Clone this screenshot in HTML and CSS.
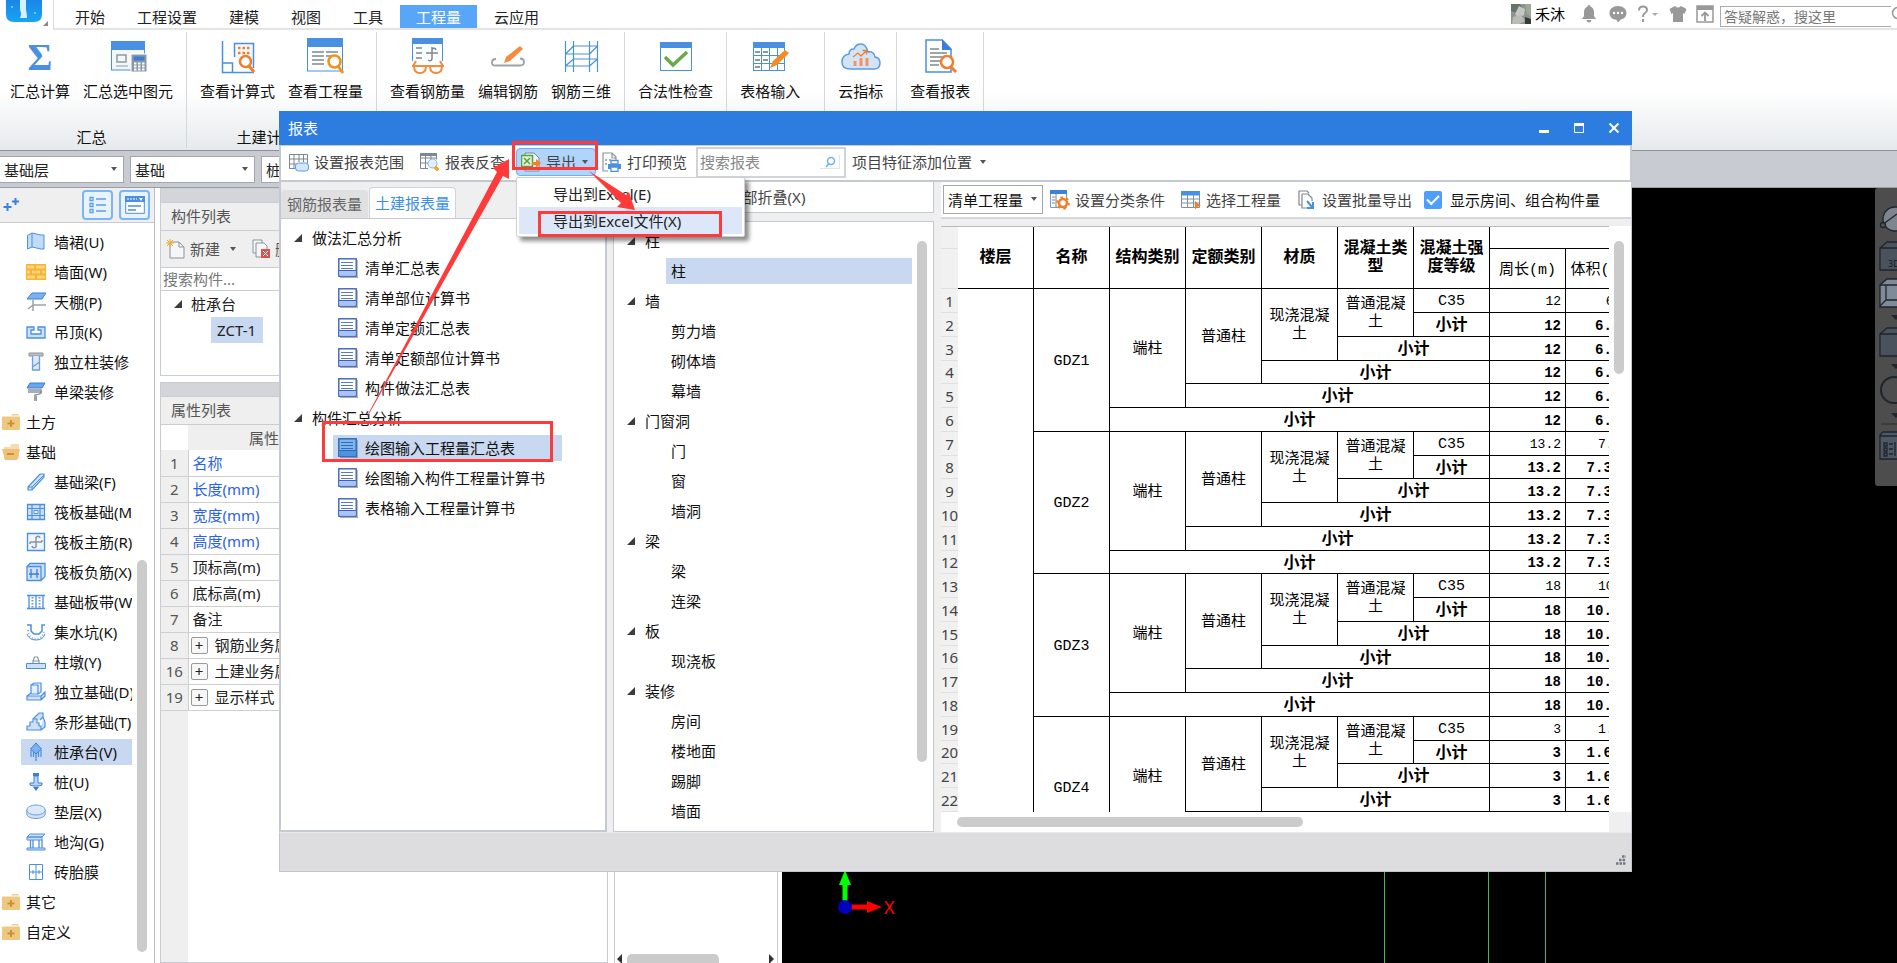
FILE: index.html
```html
<!DOCTYPE html>
<html lang="zh-CN">
<head>
<meta charset="utf-8">
<title>报表</title>
<link rel="stylesheet" href="styles.css">
</head>
<body>
<svg class="defs" aria-hidden="true">
  <symbol id="i-doc" viewBox="0 0 20 20"><path d="M2 19.5h18V2" fill="none" stroke="#a9a9b4" stroke-width="1.5"/><rect x=".8" y=".8" width="17.4" height="17.4" fill="#fff" stroke="#3c62b8" stroke-width="1.4"/><rect x="1.5" y="12.5" width="16" height="5" fill="#a9c4fa"/><path d="M3 4.5h12M3 7.5h12M3 10.5h12" stroke="#5a78c8" stroke-width="1"/><path d="M1 12.5h17" stroke="#3c62b8"/></symbol>
  <symbol id="i-doc-on" viewBox="0 0 20 20"><path d="M2 19.5h18V2" fill="none" stroke="#8297b8" stroke-width="1.5"/><rect x=".8" y=".8" width="17.4" height="17.4" fill="#7fb5ec" stroke="#2b67b4" stroke-width="1.4"/><rect x="1.5" y="12.5" width="16" height="5" fill="#4c93e4"/><path d="M3 4.5h12M3 7.5h12M3 10.5h12" stroke="#2f6dbb" stroke-width="1"/><path d="M1 12.5h17" stroke="#2b67b4"/></symbol>
  <symbol id="i-folder" viewBox="0 0 18 18"><path d="M9 2.5 10.5 1H16l1.5 1.5z" fill="#eecb8f"/><rect x="0" y="3.5" width="18" height="13.5" rx="1" fill="#efc880"/><path d="M9 7v7M5.500 10.500h7" stroke="#c8913a" stroke-width="2"/></symbol>
  <symbol id="i-tri" viewBox="0 0 8 8"><path d="M8 0v8H0z" fill="#3c3c3c"/></symbol>
  <symbol id="i-caret" viewBox="0 0 8 5"><path d="M1 0h6L4 4z" fill="#555"/></symbol>
</svg>

<div class="app">
  <header class="tabs">
    <div class="logo">
      <svg width="36" height="24" viewBox="0 0 36 24"><defs><linearGradient id="lg" x1="0" y1="0" x2="0" y2="1"><stop offset="0" stop-color="#1a86e8"/><stop offset="1" stop-color="#17a4f5"/></linearGradient></defs><path d="M0 0h36v14q0 8-8 8H8q-8 0-8-8z" fill="url(#lg)"/><path d="M14 0h6v10q1 4 1 8h-7q2-4 0-8z" fill="#d6f1ff"/><circle cx="6" cy="7" r="1" fill="#9bd7ff"/><circle cx="29" cy="13" r="1" fill="#9bd7ff"/></svg>
      <svg width="5" height="5" viewBox="0 0 8 8"><path d="M8 0v8H0z" fill="#888"/></svg>
    </div>
    <nav class="tablist">
      <button>开始</button><button>工程设置</button><button>建模</button><button>视图</button><button>工具</button><button class="on">工程量</button><button>云应用</button>
      <div class="account">
        <svg width="20" height="20" viewBox="0 0 20 20"><rect width="20" height="20" fill="#8c9690"/><path d="M0 0h9l4 6-5 4-8-3z" fill="#66746a"/><path d="M8 2l6 3-1 6-6 3-3-4z" fill="#c3c9c1"/><path d="M14 0h6v13l-4-3z" fill="#9ea899"/><path d="M2 13l8-2 4 6-6 3H1z" fill="#b9bdb2"/><path d="M14 13l6 2v5h-6z" fill="#343c36"/></svg>
        <span>禾沐</span>
        <svg class="m1" width="14" height="18" viewBox="0 0 14 18"><path d="M7 0q1.500 0 1.500 1.500Q12 3 12 7v4l2 3H0l2-3V7q0-4 3.500-5.500Q5.500 0 7 0zM4.500 15h5Q9 17.500 7 17.500T4.500 15z" fill="#999"/></svg>
        <svg class="m2" width="18" height="18" viewBox="0 0 18 18"><path d="M9 1c5 0 8.500 3 8.500 7 0 3.500-2.500 6-6 6.700L9 17.500l-1.500-2.700C3 14.500.5 12 .5 8c0-4 3.500-7 8.500-7z" fill="#999"/><circle cx="5" cy="8" r="1.200" fill="#fff"/><circle cx="9" cy="8" r="1.200" fill="#fff"/><circle cx="13" cy="8" r="1.200" fill="#fff"/></svg>
        <svg class="m3" width="22" height="18" viewBox="0 0 22 18"><path d="M2 5.500Q2 1.500 6 1.500T10 5q0 2-2.500 3.500Q6 9.500 6 12M6 14v3" fill="none" stroke="#999" stroke-width="2"/><path d="M15 8h6l-3 3z" fill="#aaa"/></svg>
        <svg class="m3" width="18" height="18" viewBox="0 0 18 18"><path d="M6 1q3 3 6 0l5.500 3-2 5L14 8v9H4V8l-1.500 1-2-5z" fill="#999"/></svg>
        <svg class="m4" width="18" height="18" viewBox="0 0 18 18"><path d="M1 1h16v16H1z" fill="none" stroke="#999" stroke-width="1.500"/><path d="M1 1h16v4H1z" fill="#999"/><path d="M9 16V8M5.500 11 9 7.500l3.500 3.500" fill="none" stroke="#999" stroke-width="1.800"/></svg>
        <input class="ask" type="text" aria-label="搜索" placeholder="答疑解惑，搜这里">
        <svg class="askmag" width="6" height="16" viewBox="0 0 6 16"><circle cx="7" cy="7" r="5.500" fill="none" stroke="#999" stroke-width="1.500"/></svg>
      </div>
    </nav>
  </header>

  <section class="ribbon">
    <div class="rgroup first"><div class="ritems">
      <button><svg width="40" height="40"><text x="20" y="32" text-anchor="middle" class="sigma">Σ</text></svg>汇总计算</button>
      <button><svg width="40" height="40"><rect x="3.500" y="4" width="33" height="28" fill="#f4f7fa" stroke="#4a90e2"/><rect x="3" y="3" width="34" height="9" fill="#4a90e2"/><rect x="9" y="17" width="9" height="7" fill="none" stroke="#8f9aa3" stroke-width="1.500"/><path d="M8 28h12" stroke="#8f9aa3"/><rect x="23" y="16" width="16" height="18" fill="#8b98a5" stroke="#fff"/><rect x="25.500" y="18.500" width="11" height="4" fill="#3b7ed8"/><path d="M26 25.500h11M26 28.500h11M26 31.500h11" stroke="#fff" stroke-width="2" stroke-dasharray="2.500 1.500"/></svg>汇总选中图元</button>
    </div><span>汇总</span></div>
    <div class="rgroup"><div class="ritems">
      <button><svg width="40" height="40"><path d="M4.500 3v31.500H36M4.500 25h10v9.500" fill="none" stroke="#4a90e2" stroke-width="1.500"/><path d="M16.500 19V5.500h19V30" fill="#f5f8fb" stroke="#4a90e2" stroke-width="1.500"/><path d="M20 10h13M20 15h13" stroke="#f07f2b" stroke-width="2.500" stroke-dasharray="2.500 2"/><circle cx="27.500" cy="23.500" r="5.500" fill="#fff" stroke="#f07f2b" stroke-width="2.500"/><path d="M31 28l5 6" stroke="#f07f2b" stroke-width="3"/></svg>查看计算式</button>
      <button><svg width="40" height="40"><rect x="1.500" y="1" width="35" height="32" fill="#fdfefe" stroke="#4a90e2"/><rect x="1" y="0" width="36" height="9" fill="#4a90e2"/><path d="M6 14h12M6 18h12M6 22h12M6 26h12M20 14h12M20 18h12" stroke="#7f8890" stroke-width="1.500"/><circle cx="28.500" cy="23.500" r="6" fill="#fff" stroke="#f0921e" stroke-width="2.500"/><path d="M32 28l5 7" stroke="#f0921e" stroke-width="3"/></svg>查看工程量</button>
    </div><span>土建计算结果</span></div>
    <div class="rgroup"><div class="ritems">
      <button><svg width="40" height="40"><path d="M4.500 23V1h30v22" fill="#fbfdfe" stroke="#4a90e2"/><rect x="4" y="0" width="31" height="6" fill="#4a90e2"/><path d="M8 10h6M8 15h6M8 20h6M18 15h12M24 9v12q-1 3-4 1M24 11q3-2 4 1" fill="none" stroke="#7f8890" stroke-width="1.500"/><path d="M8 23 5 28M32 23l3 5M4 28h32" stroke="#f58b3c" stroke-width="2" fill="none"/><path d="M6 28h12q0 7-6 7t-6-7zM22 28h12q0 7-6 7t-6-7z" fill="#fff" stroke="#f58b3c" stroke-width="2"/></svg>查看钢筋量</button>
      <button><svg width="40" height="40"><path d="M8 21q-4 0-4 3.500T8 27.500h24q4 0 4-3.500t-4-3.500" fill="none" stroke="#9aa2a8" stroke-width="1.800"/><path d="M32 8l3 3-13 12-6 2 2-6z" fill="#f58b3c"/></svg>编辑钢筋</button>
      <button><svg width="40" height="40"><path d="M4.500 3v31M12.500 3v31M28.500 3v31M36.500 3v31M4.500 16h24M4.500 28h24M12 8h25M12 21h25M4.500 16l8-8M28.500 16l8-8M4.500 28l8-7M28.500 28l8-7" fill="none" stroke="#4a90e2" stroke-width="1.200"/></svg>钢筋三维</button>
    </div></div>
    <div class="rgroup"><div class="ritems">
      <button><svg width="40" height="40"><rect x="4.500" y="4.500" width="31" height="28" fill="#fff" stroke="#4a90e2"/><rect x="4" y="4" width="32" height="6" fill="#4a90e2"/><path d="M9 19l8 8 14-13" fill="none" stroke="#6aaa4c" stroke-width="3.500"/></svg>合法性检查</button>
    </div></div>
    <div class="rgroup wide"><div class="ritems">
      <button><svg width="40" height="40"><rect x="3.500" y="4.500" width="31" height="28" fill="#fff" stroke="#4a90e2"/><rect x="3" y="4" width="32" height="6" fill="#4a90e2"/><path d="M4 17.500h30M4 25.500h30M11.500 10v22M19.500 10v22M27.500 10v22" stroke="#4a90e2"/><path d="M5 14h5M13 14h5M5 22h5M5 29h5M13 22h5" stroke="#6a7580" stroke-width="1.300"/><path d="M35 12l4 3-12 12-7 3 3-7z" fill="#f58b1e"/></svg>表格输入</button>
    </div></div>
    <div class="rgroup"><div class="ritems">
      <button><svg width="40" height="40"><path d="M9 31q-8 0-8-7t7-8q0-5 5-5 2-5 7-5t7 8q6-1 7 5 5 1 5 6 0 6-6 6z" fill="#d4e4f8" stroke="#5b9be6" stroke-width="1.500"/><path d="M14 28v-5M20 28v-8M26 28v-8" stroke="#f5935a" stroke-width="3"/><path d="M12 19l5-4 3 3 5-5M21.500 12.500h4v4" fill="none" stroke="#f07f2b" stroke-width="1.300"/></svg>云指标</button>
    </div></div>
    <div class="rgroup"><div class="ritems">
      <button><svg width="40" height="40"><path d="M6 2h16l9 9v23H6z" fill="#fff" stroke="#4a90e2" stroke-width="1.500"/><path d="M22 1v11h10z" fill="#3b7ed8"/><path d="M10 11h9M10 15h17M10 19h17M10 23h10M10 27h9" stroke="#7f8890" stroke-width="1.400"/><circle cx="27" cy="24" r="6" fill="#fff" stroke="#f07f2b" stroke-width="2.500"/><path d="M31 29l5 5" stroke="#f07f2b" stroke-width="3"/></svg>查看报表</button>
    </div></div>
  </section>

  <div class="combos">
    <label class="combo"><select aria-label="楼层"><option>基础层</option></select><svg width="8" height="5"><use href="#i-caret"/></svg></label>
    <label class="combo"><select aria-label="类型"><option>基础</option></select><svg width="8" height="5"><use href="#i-caret"/></svg></label>
    <label class="combo"><select aria-label="构件"><option>桩承台</option></select><svg width="8" height="5"><use href="#i-caret"/></svg></label>
  </div>

  <main class="work">
    <aside class="nav">
      <div class="navhead">
        <svg width="17" height="14" viewBox="0 0 17 14"><path d="M4.500 5v8M.500 9h8M12.500 0v7M9 3.500h7" stroke="#3b82dc" stroke-width="2"/></svg>
        <button aria-label="列表"><svg width="18" height="18" viewBox="0 0 18 18"><path d="M7 3h10M7 9h10M7 15h10" stroke="#5a9eec" stroke-width="1.500"/><path d="M1 1.500h3v3H1zM1 7.500h3v3H1zM1 13.500h3v3H1z" fill="none" stroke="#5a9eec" stroke-width="1.300"/></svg></button>
        <button aria-label="卡片"><svg width="20" height="18" viewBox="0 0 20 18"><rect x=".7" y=".7" width="18.600" height="16.600" fill="#fff" stroke="#4a90e2"/><path d="M0 0h20v6H0z" fill="#4a90e2"/><path d="M2 3h10" stroke="#fff" stroke-dasharray="2 1"/><path d="M14 2h4l-2 3z" fill="#fff"/><path d="M3 10h13M3 14h8" stroke="#4a90e2" stroke-width="1.500"/></svg></button>
      </div>
      <div class="navbody">
        <ul class="navlist">
          <li><svg><path d="M1.500 3.500 6 1l9 2 3 0v14l-3 0-9-2-4.500 2z" fill="#c3dbf7" stroke="#4a90e2"/><path d="M6 1v14" stroke="#4a90e2"/></svg>墙裙(U)</li>
          <li><svg><rect y="2" width="20" height="16" fill="#f9b233"/><path d="M1 3.500h7v3H1zM10 3.500h9v3h-9zM1 8.500h3v3H1zM6 8.500h8v3H6zM16 8.500h3v3h-3zM1 13.500h8v3H1zM11 13.500h8v3h-8z" fill="#ffd67d"/></svg>墙面(W)</li>
          <li><svg><path d="M6 1h14l-4 6H1z" fill="#7db2f0" stroke="#3b7ed8"/><path d="M7 8v11M7 13h13M2 17l5-4" fill="none" stroke="#9aa2a8" stroke-width="1.500"/></svg>天棚(P)</li>
          <li><svg><path d="M1 5h7v3H5v4h10V8h-3V5h7v11H1z" fill="#cfe1f8" stroke="#4a90e2" stroke-width="1.300"/></svg>吊顶(K)</li>
          <li><svg><path d="M3 1h14v3H3z" fill="#b9bfc4" stroke="#8b949b"/><path d="M6.500 4v14h7V4M6.500 15l7-5" fill="#dbe8f8" stroke="#6f9fd8" stroke-width="1.300"/></svg>独立柱装修</li>
          <li><svg><path d="M4 1h15l-3 5H1z" fill="#6aa6ee" stroke="#3b7ed8"/><path d="M2 8h13v2H2M15 9q2 3-6 4v2" fill="none" stroke="#8b949b" stroke-width="1.500"/><path d="M8 14h3v5H8z" fill="#9aa2a8"/></svg>单梁装修</li>
          <li class="grp"><svg><use href="#i-folder"/></svg>土方</li>
          <li class="grp"><svg><path d="M9 1h8v15H2V4h6z" fill="#f3dcae"/><path d="M0 6h18l-3 11H3z" fill="#efc27a"/><path d="M5 11h7" stroke="#c8913a" stroke-width="2"/></svg>基础</li>
          <li><svg><path d="M2 15 14 2h4v3L6 18H2z" fill="#cfe1f8" stroke="#4a90e2" stroke-width="1.200"/><path d="M2 15h4v3M6 15 18 3" fill="none" stroke="#4a90e2"/></svg>基础梁(F)</li>
          <li><svg><path d="M1.500 2.500h17v15h-17z" fill="#cfe1f8" stroke="#4a90e2" stroke-width="1.300"/><path d="M6 2v16M14 2v16M1 6.500h18M1 13.500h18" stroke="#4a90e2" stroke-width="1.200"/><path d="M8 8.500h4v3H8z" fill="#fff" stroke="#4a90e2"/></svg>筏板基础(M)</li>
          <li><svg><path d="M1.500 1.500h17v17h-17z" fill="#eef5fd" stroke="#4a90e2" stroke-width="1.300"/><path d="M4 10h12M10 5v10q-3 2-4-1M10 5q3-2 4 1M4 10v2M16 10V8" fill="none" stroke="#8b949b" stroke-width="1.500"/></svg>筏板主筋(R)</li>
          <li><svg><path d="M1 4.500h14v14H1zM1 4.500 4 1.500h15v13l-4 4" fill="#cfe1f8" stroke="#4a90e2" stroke-width="1.300"/><path d="M5 7v9M11 7v9M3 12h10" stroke="#3b7ed8" stroke-width="1.300"/></svg>筏板负筋(X)</li>
          <li><svg><path d="M3 4v12M10 4v12M17 4v12M1 3.500h18M1 16.500h18" stroke="#4a90e2" stroke-width="1.300"/><path d="M6.500 5v11M13.500 5v11" stroke="#6f9fd8" stroke-width="2" stroke-dasharray="1.500 1.500"/></svg>基础板带(W)</li>
          <li><svg><path d="M1 3h4v6l3 3h5l3-3V3h3" fill="none" stroke="#4a90e2" stroke-width="1.500"/><path d="M2 8q1 9 8 9t8-9" fill="none" stroke="#8ba7c8" stroke-width="2" stroke-dasharray="1 2"/><path d="M1 12q2 6 9 6t9-6" fill="none" stroke="#4a90e2"/></svg>集水坑(K)</li>
          <li><svg><path d="M.500 11.500h19v5H.500z" fill="#cfe1f8" stroke="#4a90e2"/><path d="M7 11V9l1.500-4h3L13 9v2M7 9h6" fill="none" stroke="#8b949b" stroke-width="1.200"/></svg>柱墩(Y)</li>
          <li><svg><path d="M1 14h14v4H1zM1 14l4-3M15 14l4-4v4l-4 4" fill="#cfe1f8" stroke="#4a90e2" stroke-width="1.200"/><path d="M5 3h7v9H5zM5 3l3-2h7v9l-3 2V3" fill="#e6f0fc" stroke="#4a90e2" stroke-width="1.200"/></svg>独立基础(D)</li>
          <li><svg><path d="M1 18v-4h3v-4h3V7h4v4h2v3h2v4zM7 7l6-6h4v4l-3 3M17 5l2 5v5l-4 3" fill="#cfe1f8" stroke="#4a90e2" stroke-width="1.200"/></svg>条形基础(T)</li>
          <li class="on"><svg><path d="M10 1l5.500 6-5.500 5-5.500-5z" fill="#7db2f0" stroke="#3b7ed8"/><path d="M5 8v7M10 12v7M15 8v7M7.500 10v5M12.500 10v5" stroke="#4a90e2" stroke-width="1.300"/></svg>桩承台(V)</li>
          <li><svg><path d="M8 4h4v7h4v2q-2 1-4 1H8q-2 0-4-1v-2h4z" fill="#b9d5f7" stroke="#3b7ed8"/><path d="M7 1h6v3H7zM7 15h6l-3 4z" fill="#3b7ed8"/></svg>桩(U)</li>
          <li><svg><path d="M.800 8v4c0 6 18.400 6 18.400 0V8" fill="#cfe1f8" stroke="#6f9fd8"/><ellipse cx="10" cy="8" rx="9.200" ry="5" fill="#dce9fa" stroke="#6f9fd8"/></svg>垫层(X)</li>
          <li><svg><path d="M1 5l3-3h15l-3 3zM1 5h15v3H1zM1 18h18v-2H1z" fill="#cfe1f8" stroke="#4a90e2"/><path d="M4.500 8v8M7 8v8M13 8v8M16 8v8" stroke="#4a90e2" stroke-width="1.300"/></svg>地沟(G)</li>
          <li><svg><path d="M3.500 2.500h13v15h-13zM10 2v15M3 10h14M7 8v4M13 8v4" fill="none" stroke="#4a90e2"/></svg>砖胎膜</li>
          <li class="grp"><svg><use href="#i-folder"/></svg>其它</li>
          <li class="grp"><svg><use href="#i-folder"/></svg>自定义</li>
        </ul>
        <div class="vtrack navtrack"><i></i></div>
      </div>
    </aside>

    <div class="props">
      <section class="panel">
        <div class="grab"></div>
        <h2>构件列表</h2>
        <div class="ptools">
          <button><svg width="20" height="20" viewBox="0 0 20 20"><path d="M4 3h9l5 5v11H4z" fill="#f4f6f8" stroke="#8b949b"/><path d="M13 3v5h5" fill="none" stroke="#8b949b"/><path d="M4 0v8M0 4h8M1 1l6 6M7 1 1 7" stroke="#f5a623"/></svg>新建<svg class="pcar" width="8" height="5"><use href="#i-caret"/></svg></button>
          <button><svg width="20" height="20" viewBox="0 0 20 20"><path d="M5 14H2V1h9v3M5 4h8l3 3v11H5z" fill="#f4f6f8" stroke="#8b949b"/><path d="M10 10h9v9h-9z" fill="#d9534f"/><path d="M12 12l5 5M17 12l-5 5" stroke="#fff"/></svg>删除</button>
        </div>
        <input class="psearch" type="text" aria-label="搜索构件" placeholder="搜索构件...">
        <ul class="ctree"><li><svg width="8" height="8"><use href="#i-tri"/></svg>桩承台</li><li class="on">ZCT-1</li></ul>
      </section>
      <section class="panel grow">
        <div class="grab"></div>
        <h2>属性列表</h2>
        <table class="attrs">
          <tr><th></th><th>属性名称</th></tr>
          <tr><td>1</td><td class="b">名称</td></tr>
          <tr><td>2</td><td class="b">长度(mm)</td></tr>
          <tr><td>3</td><td class="b">宽度(mm)</td></tr>
          <tr><td>4</td><td class="b">高度(mm)</td></tr>
          <tr><td>5</td><td>顶标高(m)</td></tr>
          <tr><td>6</td><td>底标高(m)</td></tr>
          <tr><td>7</td><td>备注</td></tr>
          <tr><td>8</td><td><button class="plus">+</button>钢筋业务属性</td></tr>
          <tr><td>16</td><td><button class="plus">+</button>土建业务属性</td></tr>
          <tr><td>19</td><td><button class="plus">+</button>显示样式</td></tr>
        </table>
        <div class="attrfill"></div>
      </section>
    </div>

    <div class="side">
      <div class="hbar"><svg width="5" height="10"><path d="M5 0v10L0 5z" fill="#333"/></svg><i></i><svg width="5" height="10"><path d="M0 0v10l5-5z" fill="#333"/></svg></div>
    </div>

    <div class="canvas">
      <svg class="axis" width="60" height="60" viewBox="0 0 60 60"><path d="M13 44V18" stroke="#0f0" stroke-width="5"/><path d="M13 7l6 15H7z" fill="#0f0"/><path d="M14 44h24" stroke="#f00" stroke-width="5"/><path d="M35 38l15 6-15 6z" fill="#f00"/><circle cx="13" cy="44" r="7" fill="#00b"/></svg>
      <span class="axisx">X</span>
      <i class="gl g1"></i><i class="gl g2"></i><i class="gl g3"></i>
      <div class="viewtools">
        <svg width="22" height="298" viewBox="0 0 22 298"><g stroke="#1f252c" stroke-width="1.300">
          <circle cx="20" cy="31" r="12" fill="#7d858e"/><path d="M7 37 22 26" fill="none"/><circle cx="8" cy="37" r="2.500" fill="#555"/>
          <path d="M5 60l7-6h12v28H5zM5 60h19" fill="#4a525e"/>
          <path d="M5 97l7-6h12v28H5z" fill="#7f8b99"/><path d="M5 97h19M11 97v15l-6 6M11 112h13" fill="none"/>
          <path d="M5 146l7-6h12v28H5zM5 146h19" fill="#4a525e"/>
          <circle cx="19" cy="202" r="13" fill="none" stroke-width="2"/>
          <path d="M6 236h16" stroke="#333"/>
          <path d="M5 247l3-3h16v27H5zM5 248h19" fill="#4f5966"/><path d="M9 255h3v3H9zM9 260h3v3H9zM9 265h3v3H9zM14 256h4M14 261h4M14 266h4M20 254v14" fill="none"/></g>
          <path d="M16 127h10l-5 5zM16 176h10l-5 5zM16 225h10l-5 5z" fill="#1f252c"/>
          <text x="13" y="79" class="t3d">3D</text></svg>
      </div>
    </div>
  </main>

  <div class="dialog" role="dialog" aria-label="报表">
    <div class="dtitle"><span>报表</span>
      <button aria-label="最小化"><svg width="12" height="12"><path d="M1 9.500h10" stroke="#fff" stroke-width="3"/></svg></button>
      <button aria-label="最大化"><svg width="12" height="12"><path d="M1.500 2h9v8.500h-9z" fill="none" stroke="#fff"/><path d="M1 2.500h10" stroke="#fff" stroke-width="3"/></svg></button>
      <button aria-label="关闭"><svg width="12" height="12"><path d="M1.500 1.500l9 9M10.500 1.500l-9 9" stroke="#fff" stroke-width="2"/></svg></button>
    </div>
    <div class="dtools">
      <button class="tb"><svg width="20" height="20" viewBox="0 0 20 20"><path d="M.500 2.500h18v9M.500 2.500v14H6M.500 7h18M.500 12H7M5 2v14M10 2v8M14.500 2v8" fill="none" stroke="#7d8791"/><rect x="6.500" y="11" width="13" height="8" rx="3" fill="#d3e6fb" stroke="#5a9eec"/></svg>设置报表范围</button>
      <button class="tb"><svg width="20" height="20" viewBox="0 0 20 20"><path d="M.500 1.500h16v6M.500 1.500v15H8M.500 6h16M.500 11H8M5.500 4v12M11 4v4" fill="none" stroke="#7d8791"/><path d="M0 1h17v3H0z" fill="#7d8791"/><circle cx="12.500" cy="11.500" r="4.500" fill="#e3effc" stroke="#7db2f0"/><path d="M16 14l3 3-2 2-3-3z" fill="#f5a623" stroke="#f5a623"/></svg>报表反查</button>
      <div class="export">
        <button class="tb open" aria-haspopup="menu"><svg width="20" height="20" viewBox="0 0 20 20"><path d="M4 1h9l5 5v13H4z" fill="#e9f2fc" stroke="#7d8791"/><rect x="0.500" y="3.500" width="11" height="11" fill="#e3f2d9" stroke="#5aa03c" stroke-width="1.500"/><path d="M3 6l6 6M9 6l-6 6" stroke="#5aa03c" stroke-width="1.500"/><path d="M15 7l5 4-5 5v-3h-4v-3h4z" fill="#f58220"/></svg>导出<svg class="car" width="8" height="5"><use href="#i-caret"/></svg></button>
        <div class="menu" role="menu"><button role="menuitem">导出到Excel(E)</button><button role="menuitem" class="on">导出到Excel文件(X)</button></div>
      </div>
      <button class="tb"><svg width="20" height="20" viewBox="0 0 20 20"><path d="M6 19H1V1h9l4 4v3M10 1v5h4" fill="#fff" stroke="#8b949b" stroke-width="1.200"/><path d="M3 8h2M3 12h2M7 8h2" stroke="#8b949b" stroke-width="1.500"/><path d="M6 12h13v5H6z" fill="#4a90e2"/><path d="M9 8.500h7V12H9zM9 15h7v4.500H9z" fill="#fff" stroke="#4a90e2" stroke-width="1.300"/></svg>打印预览</button>
      <div class="dsearch"><input type="text" aria-label="搜索报表" placeholder="搜索报表"><svg width="20" height="14" viewBox="0 0 20 14"><path d="M0 13.500h19.500V0" fill="none" stroke="#e3e3e3"/><circle cx="11" cy="6" r="3.500" fill="none" stroke="#6bb0f2" stroke-width="1.500"/><path d="M8.500 9 6 12" stroke="#6bb0f2" stroke-width="1.500"/></svg></div>
      <button class="tb">项目特征添加位置<svg class="car" width="8" height="5"><use href="#i-caret"/></svg></button>
    </div>

    <div class="dbody">
      <div class="colA">
        <div class="dtabs"><button>钢筋报表量</button><button class="on">土建报表量</button></div>
        <div class="pane">
          <ul class="tree">
            <li class="g"><svg width="8" height="8"><use href="#i-tri"/></svg>做法汇总分析</li>
            <li><svg width="20" height="20"><use href="#i-doc"/></svg>清单汇总表</li>
            <li><svg width="20" height="20"><use href="#i-doc"/></svg>清单部位计算书</li>
            <li><svg width="20" height="20"><use href="#i-doc"/></svg>清单定额汇总表</li>
            <li><svg width="20" height="20"><use href="#i-doc"/></svg>清单定额部位计算书</li>
            <li><svg width="20" height="20"><use href="#i-doc"/></svg>构件做法汇总表</li>
            <li class="g"><svg width="8" height="8"><use href="#i-tri"/></svg>构件汇总分析</li>
            <li class="on"><svg width="20" height="20"><use href="#i-doc-on"/></svg>绘图输入工程量汇总表</li>
            <li><svg width="20" height="20"><use href="#i-doc"/></svg>绘图输入构件工程量计算书</li>
            <li><svg width="20" height="20"><use href="#i-doc"/></svg>表格输入工程量计算书</li>
          </ul>
        </div>
      </div>

      <div class="colB">
        <div class="fold"><button>全部展开(Z)</button><button>全部折叠(X)</button></div>
        <div class="pane split">
          <ul class="tree types">
            <li class="g"><svg width="8" height="8"><use href="#i-tri"/></svg>柱</li><li class="on">柱</li>
            <li class="g"><svg width="8" height="8"><use href="#i-tri"/></svg>墙</li><li>剪力墙</li><li>砌体墙</li><li>幕墙</li>
            <li class="g"><svg width="8" height="8"><use href="#i-tri"/></svg>门窗洞</li><li>门</li><li>窗</li><li>墙洞</li>
            <li class="g"><svg width="8" height="8"><use href="#i-tri"/></svg>梁</li><li>梁</li><li>连梁</li>
            <li class="g"><svg width="8" height="8"><use href="#i-tri"/></svg>板</li><li>现浇板</li>
            <li class="g"><svg width="8" height="8"><use href="#i-tri"/></svg>装修</li><li>房间</li><li>楼地面</li><li>踢脚</li><li>墙面</li>
          </ul>
          <div class="vtrack typetrack"><i></i></div>
        </div>
      </div>

      <div class="colC">
        <div class="rtools">
          <label class="combo small"><select aria-label="工程量类型"><option>清单工程量</option></select><svg width="8" height="5"><use href="#i-caret"/></svg></label>
          <button class="tb"><svg width="20" height="20" viewBox="0 0 20 20"><path d="M.500.500h16v17H.500z" fill="#fff" stroke="#6f9fd8"/><path d="M0 0h17v4H0z" fill="#3b82dc"/><path d="M6 4v14M2 7h3M2 10h3M2 13h3" stroke="#7d8791"/><circle cx="13" cy="13" r="4" fill="#fff" stroke="#f07f2b" stroke-width="2.500"/><circle cx="13" cy="13" r="5.800" fill="none" stroke="#f07f2b" stroke-width="2" stroke-dasharray="2.500 3.500"/></svg>设置分类条件</button>
          <button class="tb"><svg width="20" height="20" viewBox="0 0 20 20"><path d="M.500 1.500h18v16H.500zM0 9h18M0 13h18M6.500 5v12M12.500 5v12" fill="#fff" stroke="#7d8fa5"/><path d="M0 1h19v4.500H0z" fill="#4a90e2"/><path d="M14 11l6 5-3 .500-3 3z" fill="#f07f2b"/></svg>选择工程量</button>
          <button class="tb"><svg width="20" height="20" viewBox="0 0 20 20"><path d="M5 15H2V1h8l2 2M5 4h6l4 4v3M5 4v14h5" fill="none" stroke="#7d8791" stroke-width="1.200"/><path d="M10 11l5 6M16 12v6h-6" fill="none" stroke="#4a90e2" stroke-width="2"/></svg>设置批量导出</button>
          <label class="check"><input type="checkbox" checked>显示房间、组合构件量</label>
        </div>
        <div class="sheet">
          <div class="clip">
            <table class="report">
              <colgroup><col class="n"><col span="9"></colgroup>
              <thead>
                <tr><th class="n"></th><th rowspan="2">楼层</th><th rowspan="2">名称</th><th rowspan="2">结构类别</th><th rowspan="2">定额类别</th><th rowspan="2">材质</th><th rowspan="2">混凝土类型</th><th rowspan="2">混凝土强度等级</th><th colspan="2"></th></tr>
                <tr><th class="n"></th><th class="r">周长(m)</th><th class="r">体积(m3)</th></tr>
              </thead>
              <tbody>
                <tr><th class="n">1</th><td rowspan="24"></td><td rowspan="6">GDZ1</td><td rowspan="5">端柱</td><td rowspan="4">普通柱</td><td rowspan="3">现浇混凝土</td><td rowspan="2">普通混凝土</td><td>C35</td><td class="q">12</td><td class="q">6.05</td></tr>
                <tr class="s"><th class="n">2</th><td>小计</td><td class="q">12</td><td class="q">6.048</td></tr>
                <tr class="s"><th class="n">3</th><td colspan="2">小计</td><td class="q">12</td><td class="q">6.048</td></tr>
                <tr class="s"><th class="n">4</th><td colspan="3">小计</td><td class="q">12</td><td class="q">6.048</td></tr>
                <tr class="s"><th class="n">5</th><td colspan="4">小计</td><td class="q">12</td><td class="q">6.048</td></tr>
                <tr class="s"><th class="n">6</th><td colspan="5">小计</td><td class="q">12</td><td class="q">6.048</td></tr>
                <tr><th class="n">7</th><td rowspan="6">GDZ2</td><td rowspan="5">端柱</td><td rowspan="4">普通柱</td><td rowspan="3">现浇混凝土</td><td rowspan="2">普通混凝土</td><td>C35</td><td class="q">13.2</td><td class="q">7.318</td></tr>
                <tr class="s"><th class="n">8</th><td>小计</td><td class="q">13.2</td><td class="q">7.3176</td></tr>
                <tr class="s"><th class="n">9</th><td colspan="2">小计</td><td class="q">13.2</td><td class="q">7.3176</td></tr>
                <tr class="s"><th class="n">10</th><td colspan="3">小计</td><td class="q">13.2</td><td class="q">7.3176</td></tr>
                <tr class="s"><th class="n">11</th><td colspan="4">小计</td><td class="q">13.2</td><td class="q">7.3176</td></tr>
                <tr class="s"><th class="n">12</th><td colspan="5">小计</td><td class="q">13.2</td><td class="q">7.3176</td></tr>
                <tr><th class="n">13</th><td rowspan="6">GDZ3</td><td rowspan="5">端柱</td><td rowspan="4">普通柱</td><td rowspan="3">现浇混凝土</td><td rowspan="2">普通混凝土</td><td>C35</td><td class="q">18</td><td class="q">10.10</td></tr>
                <tr class="s"><th class="n">14</th><td>小计</td><td class="q">18</td><td class="q">10.098</td></tr>
                <tr class="s"><th class="n">15</th><td colspan="2">小计</td><td class="q">18</td><td class="q">10.098</td></tr>
                <tr class="s"><th class="n">16</th><td colspan="3">小计</td><td class="q">18</td><td class="q">10.098</td></tr>
                <tr class="s"><th class="n">17</th><td colspan="4">小计</td><td class="q">18</td><td class="q">10.098</td></tr>
                <tr class="s"><th class="n">18</th><td colspan="5">小计</td><td class="q">18</td><td class="q">10.098</td></tr>
                <tr><th class="n">19</th><td rowspan="6">GDZ4</td><td rowspan="5">端柱</td><td rowspan="4">普通柱</td><td rowspan="3">现浇混凝土</td><td rowspan="2">普通混凝土</td><td>C35</td><td class="q">3</td><td class="q">1.638</td></tr>
                <tr class="s"><th class="n">20</th><td>小计</td><td class="q">3</td><td class="q">1.6384</td></tr>
                <tr class="s"><th class="n">21</th><td colspan="2">小计</td><td class="q">3</td><td class="q">1.6384</td></tr>
                <tr class="s"><th class="n">22</th><td colspan="3">小计</td><td class="q">3</td><td class="q">1.6384</td></tr>
                <tr class="s"><th class="n">23</th><td colspan="4">小计</td><td class="q">3</td><td class="q">1.6384</td></tr>
                <tr class="s"><th class="n">24</th><td colspan="5">小计</td><td class="q">3</td><td class="q">1.6384</td></tr>
              </tbody>
            </table>
          </div>
          <div class="vtrack sheettrack"><i></i></div>
          <div class="htrack"><i></i></div>
          <div class="corner"></div>
        </div>
      </div>
    </div>
    <div class="dfoot"><svg width="11" height="11"><path d="M1 9.500h10M4 6h7M7 2.500h4" stroke="#6f7880" stroke-width="2.500" stroke-dasharray="2.500 1"/></svg></div>
  </div>

  <svg class="marks" width="760" height="480" aria-hidden="true">
    <g fill="none" stroke="#ff3a3a" stroke-width="3"><rect x="513.500" y="142.500" width="83" height="26"/><rect x="539.500" y="212.500" width="181" height="23"/><rect x="323.500" y="422.500" width="228" height="38"/></g>
    <g fill="#ff3a3a"><path d="M366 418 497 172l-4-4 16-9v20l-6-3L369 414z"/><path d="M589 171l37 24 3-3 6 18-18-3 4-4z"/></g>
  </svg>
</div>
</body>
</html>
```
FILE: styles.css
```css
* { box-sizing: border-box; }
body {
  margin: 0;
  font: 15px/20px "Noto Sans", "Noto Sans CJK SC", sans-serif;
  color: #222;
  background: #fff;
}
button, input, select { font: inherit; color: inherit; margin: 0; }
button { border: 0; background: none; padding: 0; white-space: nowrap; }
ul { list-style: none; margin: 0; padding: 0; }
svg { flex: none; display: block; }
i { display: block; }
.defs { position: absolute; width: 0; height: 0; }
.app {
  position: relative;
  height: 100vh;
  overflow: hidden;
  display: grid;
  grid-template-rows: 30px 121px 37px minmax(0, 1fr);
}

/* top tab row */
.tabs { display: flex; }
.logo { width: 53px; padding-left: 6px; display: flex; align-items: flex-end; gap: 1px; padding-bottom: 4px; }
.logo svg:first-child { align-self: flex-start; }
.tablist {
  flex: 1;
  min-width: 0;
  display: flex;
  align-items: flex-end;
  padding-left: 5px;
  border-left: 1px solid #dcdcdc;
  border-bottom: 2px solid #e4e4e4;
}
.tablist button { height: 23px; padding: 0 16px; }
.tablist .on { margin: 0 1px; background: #58a6f8; color: #fff; }
.account { margin-left: auto; display: flex; align-items: center; height: 28px; color: #000; }
.account span { margin-left: 4px; }
.m1 { margin-left: 17px; }
.m2 { margin-left: 13px; }
.m3 { margin-left: 10px; }
.m4 { margin: 0 6px 0 9px; }
.ask { width: 171px; height: 21px; margin-top: 4px; font-size: 14px; line-height: 16px; padding: 0 3px; border: 1px solid #aaa; border-right: 0; }
.ask::placeholder { color: #777; opacity: 1; }

/* ribbon */
.ribbon {
  display: flex;
  background: linear-gradient(#fff 0, #fff 50%, #e6eaec 100%);
  border-bottom: 1px solid #8d9296;
  color: #111;
}
.rgroup {
  display: flex;
  flex-direction: column;
  justify-content: space-between;
  margin: 2px 0 2px;
  padding: 6px 13px 0;
  border-right: 1px solid #d5d8da;
}
.rgroup.first { padding-left: 10px; }
.rgroup.wide { padding-right: 24px; }
.rgroup > span { text-align: center; line-height: 22px; }
.ritems { display: flex; gap: 13px; }
.ritems button { display: flex; flex-direction: column; align-items: center; line-height: 26px; }
.sigma { font: bold 38px "Liberation Serif", serif; fill: #4a90e2; }

/* combo row */
.combos { display: flex; gap: 6px; padding: 5px 0; background: #c8cbd1; border-bottom: 1px solid #9a9ea5; }
.combo {
  display: flex;
  align-items: center;
  width: 125px;
  height: 27px;
  padding-right: 5px;
  border: 1px solid #a3a7ad;
  background: #fff;
}
.combo:first-child { margin-left: -1px; }
.combo select { flex: 1; min-width: 0; border: 0; background: none; appearance: none; padding: 0 4px; line-height: 20px; }

/* workspace */
.work { display: flex; min-height: 0; background: #fff; }
.nav { width: 155px; display: flex; flex-direction: column; border-right: 1px solid #b9bdc2; }
.navhead { display: flex; align-items: center; height: 35px; background: #efefef; border-bottom: 1px solid #c9ccd0; padding-left: 3px; }
.navhead button {
  width: 31px; height: 30px; margin-left: 6px;
  display: flex; align-items: center; justify-content: center;
  border: 2px solid #7ab5f5; border-radius: 4px; background: #e9f3fe;
}
.navhead svg + button { margin-left: auto; }
.navhead button:last-child { margin-right: 4px; }
.navbody { flex: 1; min-height: 0; display: flex; overflow: hidden; }
.navlist { width: 132px; padding-top: 6px; display: flex; flex-direction: column; gap: 4px; flex: none; color: #111; }
.navlist li {
  flex: none; display: flex; align-items: center; gap: 8px;
  height: 26px; margin-left: 21px; padding-left: 5px;
  overflow: hidden; white-space: nowrap;
}
.navlist svg { width: 20px; height: 20px; }
.navlist .grp { margin-left: 0; padding-left: 2px; gap: 6px; }
.navlist .grp svg { width: 18px; height: 18px; }
.navlist .on { background: #c8d8f0; }
.vtrack { display: grid; width: 10px; }
.vtrack i { grid-row: 2; border-radius: 5px; background: #cbcbcb; }
.navtrack { margin-left: 5px; grid-template-rows: 337fr 392fr 11fr; }

.props { width: 448px; margin-left: 5px; display: flex; flex-direction: column; gap: 6px; border-right: 1px solid #c9ccd0; }
.panel { border: 1px solid #c9ccd0; border-right: 0; height: 188px; flex: none; }
.panel.grow { flex: 1; height: auto; display: flex; flex-direction: column; }
.grab { height: 14px; background: #d4d5da; border-bottom: 1px solid #c9ccd0; }
.panel h2 { margin: 0; height: 28px; padding-left: 10px; font: inherit; line-height: 26px; color: #555; background: #efefef; border-bottom: 1px solid #c9ccd0; }
.ptools { display: flex; align-items: center; gap: 14px; height: 36px; padding-left: 5px; background: #efefef; color: #555; }
.ptools button { display: flex; align-items: center; gap: 4px; }
.pcar { margin: 0 0 0 5px; }
.psearch { display: block; width: 100%; height: 24px; border: 1px solid #c9ccd0; border-width: 1px 0; padding: 0 2px; }
.psearch::placeholder { color: #777; opacity: 1; }
.ctree li { height: 26px; display: flex; align-items: center; gap: 9px; padding-left: 13px; }
.ctree .on { width: 52px; margin-left: 50px; padding: 0 6px; background: #c8d8f0; }
.attrs { width: 100%; border-collapse: collapse; table-layout: fixed; flex: none; }
.attrs th { height: 25px; font-weight: 400; color: #555; background: #efefef; text-align: left; padding: 0 0 0 61px; }
.attrs th:first-child { width: 27px; background: #fff; padding: 0; }
.attrs td { height: 26px; padding: 0 0 0 4px; border-bottom: 1px solid #cfcfcf; white-space: nowrap; overflow: hidden; }
.attrs td:first-child { padding: 0; text-align: center; color: #555; background: #efefef; border-right: 1px solid #cfcfcf; }
.attrs .b { color: #2a62e8; }
.plus { width: 17px; height: 17px; margin: 0 7px 0 -2px; border: 1px solid #999; border-radius: 2px; background: #f7f7f7; line-height: 14px; }
.attrfill { flex: 1; width: 27px; background: #efefef; }

.side { width: 164px; margin-left: 6px; display: flex; flex-direction: column; justify-content: flex-end; border: 1px solid #c9ccd0; border-width: 0 1px; }
.hbar { display: flex; align-items: center; padding: 0 3px 0 2px; height: 9px; }
.hbar i { width: 92px; height: 9px; margin: 0 auto 0 5px; border-radius: 5px 5px 0 0; background: #cbcbcb; }

.canvas { position: relative; flex: 1; margin-left: 4px; background: #000; overflow: hidden; }
.axis { position: absolute; left: 50px; bottom: 49px; }
.axis { bottom: 40px; }
.axisx { position: absolute; left: 102px; bottom: 46px; color: #f00; font-size: 18px; }
.gl { position: absolute; bottom: 0; width: 1px; height: 100%; background: #4fb54f; }
.g1 { left: 602px; }
.g2 { left: 706px; }
.g3 { left: 763px; }
.viewtools { position: absolute; right: 0; top: 0; width: 22px; height: 298px; background: #4d4d4d; border-radius: 3px 0 0 3px; }
.t3d { font: 9px "Noto Sans", sans-serif; fill: #14181d; }

/* floating report window */
.dialog {
  position: absolute;
  left: 279px;
  top: 111px;
  width: calc(100% - 544px);
  height: calc(100% - 202px);
  display: grid;
  grid-template-rows: 34px 37px minmax(0, 1fr) 40px;
  background: #efefef;
}
.dtitle { display: flex; align-items: center; gap: 23px; padding: 0 12px 1px 9px; background: #2d7de0; color: #fff; }
.dtitle span { margin-right: auto; }
.dtools { display: flex; align-items: center; padding-bottom: 2px; background: #fff; border: 2px solid #c5cad2; border-top-width: 1px; color: #444; }
.tb { display: flex; align-items: center; gap: 5px; height: 27px; padding: 0 8px; }
.car { margin: 0 3px; }
.export { position: relative; margin: 0 -2px 0 3px; }
.export .tb { height: 28px; padding: 0 4px; gap: 5px; }
.export .car { margin: 0 2px 0 0; }
.open { border: 1px solid #6fb0f5; border-radius: 4px; background: #b0d4fb; }
.menu {
  position: absolute; z-index: 2; left: 0; top: 29px; width: 229px;
  padding: 2px; border: 1px solid #d0d0d0; border-radius: 2px; background: #fff;
  box-shadow: 4px 4px 4px rgba(0, 0, 0, .45); color: #222;
}
.menu button { display: block; width: 100%; height: 27px; padding-left: 34px; text-align: left; line-height: 26px; }
.menu .on { background: #dce8fa; }
.dsearch { display: flex; align-items: center; width: 150px; height: 31px; margin-left: 1px; padding-right: 4px; border: 2px solid #d0d3d8; background: #fff; }
.dsearch input { flex: 1; min-width: 0; border: 0; padding: 0 2px; }
.dsearch input::placeholder { color: #888; opacity: 1; }
.dsearch + .tb { padding: 0 6px; gap: 4px; }

.dbody { display: flex; min-height: 0; border-right: 1px solid #c5cad2; }
.colA { width: 328px; display: flex; flex-direction: column; border-left: 2px solid #c5cad2; }
.dtabs { display: flex; align-items: flex-end; gap: 1px; height: 36px; color: #666; }
.dtabs button { height: 28px; padding: 0 6px; background: #e0e0e1; border-radius: 4px 4px 0 0; }
.dtabs .on { height: 31px; padding: 0 5px; background: #fff; color: #3b8ee8; border: 1px solid #d0d3d8; border-bottom: 0; }
.pane { flex: 1; min-height: 0; background: #fff; border: 1px solid #c5cad2; overflow: hidden; }
.colA .pane { border-width: 1px 2px 2px 0; }
.tree { padding-top: 6px; display: flex; flex-direction: column; gap: 4px; color: #111; }
.tree li { display: flex; flex: none; align-items: center; gap: 7px; height: 26px; margin-left: 52px; padding-left: 5px; width: 229px; white-space: nowrap; }
.tree .g { margin-left: 0; padding-left: 13px; gap: 10px; }
.tree .on { background: #c8d8f0; }
.colB { width: 321px; margin-left: 6px; display: flex; flex-direction: column; gap: 8px; }
.fold { display: flex; align-items: center; gap: 20px; height: 31px; padding-left: 16px; background: #fff; border: 1px solid #c5cad2; border-top: 0; color: #444; }
.split { display: flex; }
.split .tree { flex: 1; }
.types li { width: auto; }
.types li:not(.g) { margin-right: 5px; }
.typetrack { margin-right: 6px; grid-template-rows: 19fr 522fr 69fr; }

.colC { flex: 1; min-width: 0; margin-left: 7px; display: flex; flex-direction: column; gap: 7px; }
.rtools { display: flex; align-items: center; height: 37px; padding-left: 2px; background: #fff; border-bottom: 2px solid #d5d7db; color: #444; }
.small { width: 100px; height: 29px; padding-right: 4px; color: #111; }
.combo.small { margin-left: 0; }
.rtools .tb { padding: 0 8px; }
.rtools .small + .tb { padding-left: 7px; }
.check { display: flex; align-items: center; gap: 8px; margin-left: 4px; color: #111; white-space: nowrap; }
.check input { width: 18px; height: 18px; accent-color: #4d9ffb; appearance: none; border-radius: 2px; background: #4d9ffb; display: grid; place-items: center; }
.check input:checked::before { content: ""; width: 10px; height: 5px; margin-bottom: 3px; border: solid #fff; border-width: 0 0 2px 2px; transform: rotate(-45deg); }
.sheet { flex: 1; min-height: 0; display: grid; grid-template-columns: minmax(0, 1fr) 22px; grid-template-rows: minmax(0, 1fr) 20px; background: #fff; }
.clip { overflow: hidden; border-top: 1px solid #bbb; }
.sheettrack { margin-left: 5px; grid-template-rows: 15fr 133fr 437fr; }
.htrack { padding: 5px 0 5px 16px; }
.htrack i { width: 53%; height: 10px; border-radius: 5px; background: #cbcbcb; }
.corner { background: #efefef; }

.report { width: 701px; table-layout: fixed; border-collapse: separate; border-spacing: 0; color: #000; line-height: 18px; }
.report col { width: 76px; }
.report col.n { width: 17px; }
.report th, .report td {
  padding: 0 5px; text-align: center; overflow: hidden;
  border-right: 1px solid #000; border-bottom: 1px solid #000;
  font-family: "Liberation Mono", "Noto Sans CJK SC", monospace;
}
.report td { font-size: 15px; line-height: 18px; }
.report td:nth-child(n) { padding: 3px 7px 0; }
.report th { font-size: 16px; padding: 0 4px; }
.report thead tr { height: 22px; }
.report thead tr + tr { height: 40px; }
.report tbody tr { height: 24px; }
.report tbody tr:nth-child(4n) { height: 23px; }
.report .s td { font-weight: 700; font-size: 16px; }
.report .r { font-weight: 400; font-size: 15px; white-space: nowrap; padding: 4px 4px 0; }
.report tbody .q:nth-child(n) { text-align: right; font-size: 13px; padding: 2px 4px 0; }
.report .s td.q:nth-child(n) { font-size: 14px; }
.report th.n {
  padding: 0; font: 15px/20px "Noto Sans", sans-serif; color: #444;
  background: #f1f1f1; border-right: 0; border-bottom-color: #e0e0e0;
}

.dfoot { display: flex; justify-content: flex-end; align-items: flex-end; padding: 0 5px 6px 0; background: #dddddf; border: 1px solid #c0c6d0; border-top-color: #e8e8e8; }

/* red annotations */
.marks { position: absolute; left: 0; top: 0; z-index: 5; pointer-events: none; }
```
